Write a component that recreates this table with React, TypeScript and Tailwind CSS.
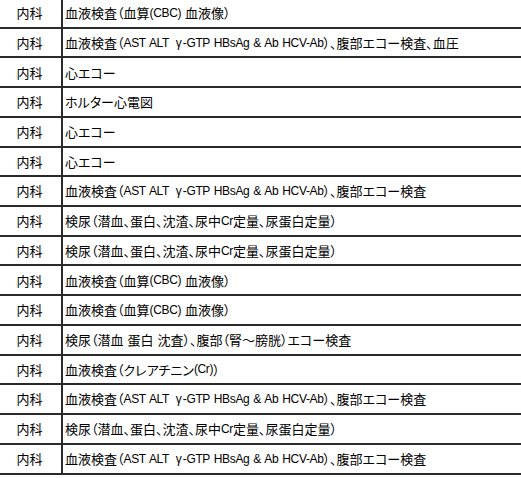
const rows: string[] = [
  "血液検査（血算(CBC) 血液像）",
  "血液検査（AST ALT γ-GTP HBsAg & Ab HCV-Ab）、腹部エコー検査、血圧",
  "心エコー",
  "ホルター心電図",
  "心エコー",
  "心エコー",
  "血液検査（AST ALT γ-GTP HBsAg & Ab HCV-Ab）、腹部エコー検査",
  "検尿（潜血、蛋白、沈渣、尿中Cr定量、尿蛋白定量）",
  "検尿（潜血、蛋白、沈渣、尿中Cr定量、尿蛋白定量）",
  "血液検査（血算(CBC) 血液像）",
  "血液検査（血算(CBC) 血液像）",
  "検尿（潜血 蛋白 沈査）、腹部（腎～膀胱）エコー検査",
  "血液検査（クレアチニン(Cr)）",
  "血液検査（AST ALT γ-GTP HBsAg & Ab HCV-Ab）、腹部エコー検査",
  "検尿（潜血、蛋白、沈渣、尿中Cr定量、尿蛋白定量）",
  "血液検査（AST ALT γ-GTP HBsAg & Ab HCV-Ab）、腹部エコー検査",
];

// latin runs (and the gamma) get an Arial-width font, the rest stays on the CJK font
function Mixed({ text }: { text: string }) {
  const parts = text.split(/([\x20-\x7E]+|γ)/).filter(Boolean);
  return (
    <>
      {parts.map((p, i) => {
        if (p === "γ")
          return (
            <span key={i} className="font-['Liberation_Sans',sans-serif] text-[12px] pl-[3px] pr-[1px]">
              γ
            </span>
          );
        if (/^[\x20-\x7E]+$/.test(p))
          return (
            <span key={i} className="font-['Liberation_Sans',sans-serif] text-[12px] tracking-[-0.35px] [word-spacing:1px] whitespace-pre">
              {p}
            </span>
          );
        return <span key={i}>{p}</span>;
      })}
    </>
  );
}

export default function App() {
  return (
    <div className="w-[521px] h-[478px] overflow-hidden bg-white text-black text-[13px] font-['Noto_Sans_CJK_JP',sans-serif] [font-feature-settings:'palt']">
      <div className="-mt-[1px]">
        {rows.map((text, i) => (
          <div key={i} className="flex h-[29.73px] border-b-2 border-[#2a2a2a]">
            <div className="w-[63px] shrink-0 flex items-center justify-center border-r-2 border-[#2a2a2a] pr-[2px]">
              内科
            </div>
            <div className="flex items-center pl-[2px] whitespace-nowrap">
              <Mixed text={text} />
            </div>
          </div>
        ))}
      </div>
    </div>
  );
}
